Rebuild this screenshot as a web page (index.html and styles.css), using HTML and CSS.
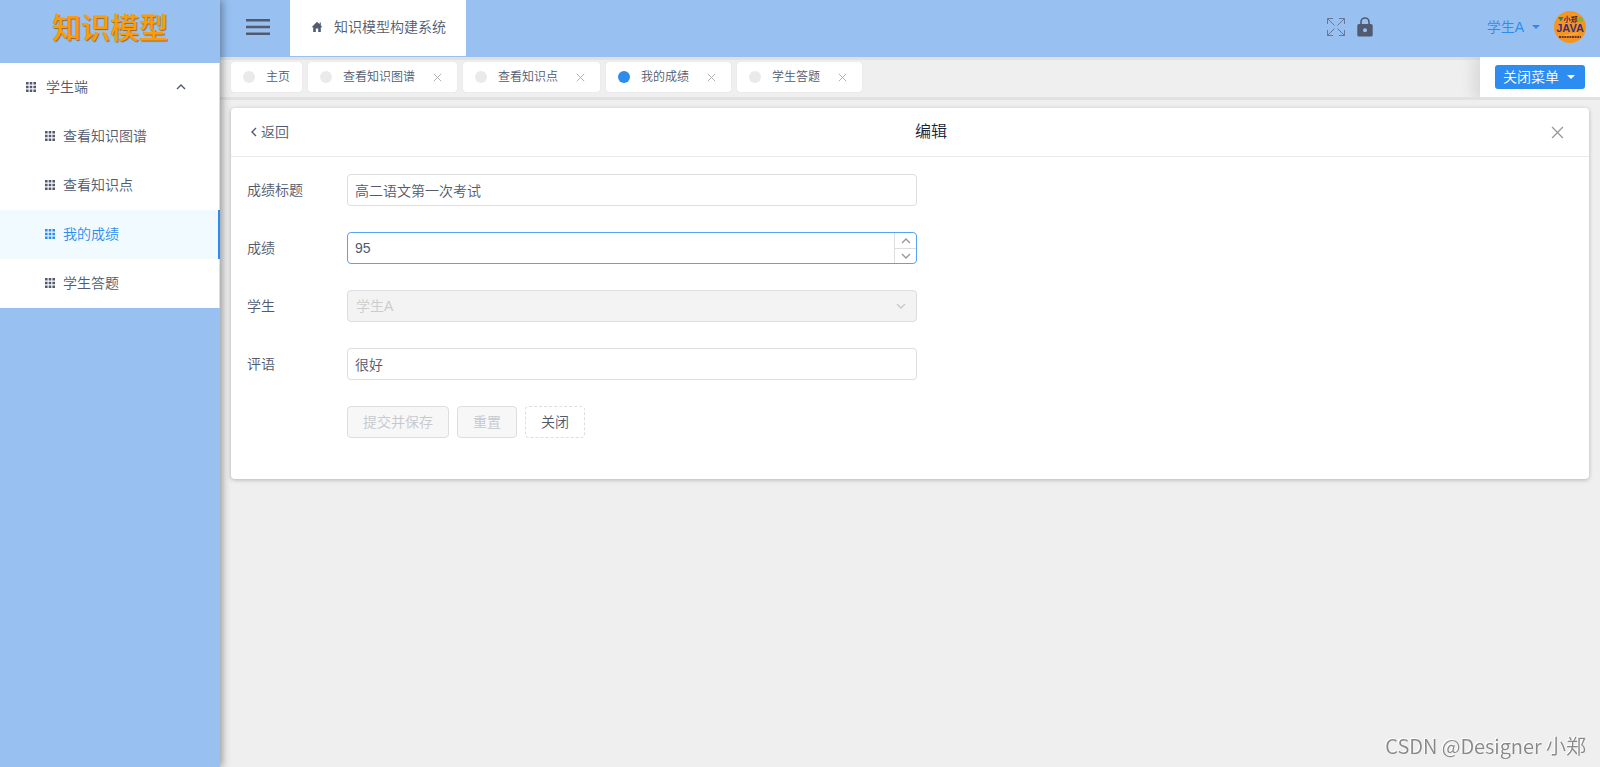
FILE: index.html
```html
<!DOCTYPE html>
<html lang="zh-CN">
<head>
<meta charset="utf-8">
<title>知识模型构建系统</title>
<link rel="stylesheet" href="styles.css">
</head>
<body>
<svg class="sprite" aria-hidden="true">
  <symbol id="grid" viewBox="0 0 10 10"><path d="M0 0h2.6v2.6H0zM3.7 0h2.6v2.6H3.7zM7.4 0H10v2.6H7.4zM0 3.7h2.6v2.6H0zM3.7 3.7h2.6v2.6H3.7zM7.4 3.7H10v2.6H7.4zM0 7.4h2.6V10H0zM3.7 7.4h2.6V10H3.7zM7.4 7.4H10V10H7.4z" fill="currentColor"/></symbol>
  <symbol id="cross" viewBox="0 0 12 12"><path d="M1 1l10 10M11 1L1 11" fill="none" stroke="currentColor" stroke-width="1.2"/></symbol>
  <symbol id="up" viewBox="0 0 10 6"><path d="M1 5l4-4 4 4" fill="none" stroke="currentColor" stroke-width="1.4"/></symbol>
  <symbol id="down" viewBox="0 0 10 6"><path d="M1 1l4 4 4-4" fill="none" stroke="currentColor" stroke-width="1.4"/></symbol>
  <symbol id="caret" viewBox="0 0 8 4"><path d="M0 0h8L4 4z" fill="currentColor"/></symbol>
</svg>
<div class="app">
  <aside class="sidebar">
    <div class="logo">知识模型</div>
    <nav class="menu">
      <button class="menu-title" type="button"><svg class="i-grid"><use href="#grid"/></svg><span>学生端</span><svg class="i-arrow"><use href="#up"/></svg></button>
      <a class="menu-item" href="#"><svg class="i-grid"><use href="#grid"/></svg>查看知识图谱</a>
      <a class="menu-item" href="#"><svg class="i-grid"><use href="#grid"/></svg>查看知识点</a>
      <a class="menu-item active" href="#"><svg class="i-grid"><use href="#grid"/></svg>我的成绩</a>
      <a class="menu-item" href="#"><svg class="i-grid"><use href="#grid"/></svg>学生答题</a>
    </nav>
  </aside>
  <div class="main">
    <header class="header">
      <button class="burger" type="button" aria-label="菜单"><svg width="24" height="18" viewBox="0 0 24 18"><path d="M0 2.2h24M0 9h24M0 15.800h24" stroke="currentColor" stroke-width="2.4"/></svg></button>
      <a class="system" href="#"><svg width="12" height="12" viewBox="0 0 12 12"><path d="M6 .8L.6 6.2h1.6V11h2.600V7.600h2.400V11h2.600V6.200h1.600L9.800 4.500V1.600H8.600v1.700z" fill="currentColor"/></svg>知识模型构建系统</a>
      <div class="tools">
        <button type="button" aria-label="全屏"><svg width="20" height="20" viewBox="0 0 20 20"><path d="M1.500 7V1.500H7M1.500 1.500l7 7M13 1.500h5.500V7M18.500 1.500l-7 7M1.500 13v5.500H7M1.500 18.500l7-7M13 18.500h5.500V13M18.500 18.500l-7-7" fill="none" stroke="currentColor" stroke-width="1"/></svg></button>
        <button type="button" aria-label="锁屏"><svg width="16" height="20" viewBox="0 0 16 20"><path d="M4 8V5a4 4 0 0 1 8 0v3" fill="none" stroke="currentColor" stroke-width="1.600"/><path d="M2 7h12a1.700 1.700 0 0 1 1.700 1.700v9.200a1.700 1.700 0 0 1-1.700 1.700H2a1.700 1.700 0 0 1-1.700-1.700V8.700A1.700 1.700 0 0 1 2 7zm6 4.200a2 2 0 1 0 0 4 2 2 0 0 0 0-4z" fill="currentColor" fill-rule="evenodd"/></svg></button>
      </div>
      <button class="user" type="button">学生A<svg class="i-caret"><use href="#caret"/></svg></button>
      <svg class="avatar" viewBox="0 0 32 32" role="img" aria-label="头像"><circle cx="16" cy="16" r="16" fill="#f7941e"/><path d="M12 13L20 3M10 25l14-3" stroke="#f9b05a" stroke-width="1"/><path d="M4 6h5.500L7 10.500z" fill="#1c8c62"/><circle cx="26.500" cy="8.500" r="2.600" fill="#8fb03a"/><text class="av-top" x="16.500" y="10.500" text-anchor="middle">小郑</text><text class="av-main" x="16" y="21" text-anchor="middle">JAVA</text><path d="M5 26h22" stroke="#6b3a2c" stroke-width="2" stroke-dasharray="2 .6"/></svg>
    </header>
    <div class="tagbar">
      <div class="tags">
        <div class="tag"><i class="dot"></i>主页</div>
        <div class="tag"><i class="dot"></i>查看知识图谱<button type="button" aria-label="关闭"><svg><use href="#cross"/></svg></button></div>
        <div class="tag"><i class="dot"></i>查看知识点<button type="button" aria-label="关闭"><svg><use href="#cross"/></svg></button></div>
        <div class="tag"><i class="dot on"></i>我的成绩<button type="button" aria-label="关闭"><svg><use href="#cross"/></svg></button></div>
        <div class="tag"><i class="dot"></i>学生答题<button type="button" aria-label="关闭"><svg><use href="#cross"/></svg></button></div>
      </div>
      <div class="closer"><button type="button">关闭菜单<svg class="i-caret"><use href="#caret"/></svg></button></div>
    </div>
    <main class="content">
      <section class="card">
        <div class="card-head">
          <a class="back" href="#"><svg width="6" height="10" viewBox="0 0 6 10"><path d="M5 1L1 5l4 4" fill="none" stroke="currentColor" stroke-width="1.4"/></svg>返回</a>
          <h1>编辑</h1>
          <button class="card-close" type="button" aria-label="关闭"><svg><use href="#cross"/></svg></button>
        </div>
        <form class="form">
          <label for="title">成绩标题</label>
          <input class="field" id="title" type="text" value="高二语文第一次考试">
          <label for="score">成绩</label>
          <div class="number">
            <input id="score" type="number" value="95">
            <div class="steps"><button type="button" aria-label="增加"><svg><use href="#up"/></svg></button><button type="button" aria-label="减少"><svg><use href="#down"/></svg></button></div>
          </div>
          <label for="student">学生</label>
          <div class="select"><select class="field" id="student" disabled><option>学生A</option></select><svg><use href="#down"/></svg></div>
          <label for="remark">评语</label>
          <input class="field" id="remark" type="text" value="很好">
          <div class="actions">
            <button type="button" disabled>提交并保存</button>
            <button type="button" disabled>重置</button>
            <button class="dashed" type="button">关闭</button>
          </div>
        </form>
      </section>
    </main>
  </div>
</div>
<div class="watermark">CSDN @Designer 小郑</div>
</body>
</html>
```

FILE: styles.css
```css
* { box-sizing: border-box; }
body {
  margin: 0;
  background: #efefef;
  color: #515a6e;
  font: 350 14px/20px "Liberation Sans", "Noto Sans CJK SC", sans-serif;
}
button, input, select { font: inherit; color: inherit; }
button { border: 0; padding: 0; background: none; cursor: pointer; }
a { color: inherit; text-decoration: none; }
svg { display: block; flex: none; }
.sprite { position: absolute; width: 0; height: 0; }

.app { display: flex; min-height: 100vh; }
.sidebar {
  flex: 0 0 220px;
  background: #98c1f2;
  box-shadow: 2px 0 8px rgba(29, 35, 41, .45);
  z-index: 2;
}
.logo {
  height: 63px;
  padding-top: 6px;
  text-align: center;
  color: #ff9b05;
  font: 500 29px/40px "Noto Sans CJK SC", sans-serif;
  text-shadow: 1px 1px 1px #8a6a3c;
}
.menu { display: flex; flex-direction: column; background: #fff; }
.menu-title, .menu-item {
  display: flex;
  align-items: center;
  height: 49px;
  padding-bottom: 2px;
  border-right: 1px solid #dcdee2;
}
.menu-title { gap: 10px; padding-left: 26px; padding-right: 33px; }
.menu-item { gap: 8px; padding-left: 45px; }
.menu-item.active { background: #f0faff; color: #2d8cf0; border-right: 2px solid #2d8cf0; }
.i-grid { width: 10px; height: 10px; }
.i-arrow { width: 10px; height: 6px; margin-left: auto; }
.i-caret { width: 8px; height: 4px; }

.main { flex: 1; min-width: 0; }
.header { display: flex; align-items: center; height: 57px; padding: 0 14px 4px 26px; background: #98c1f2; }
.burger { margin-right: 20px; }
.system {
  display: flex;
  align-items: center;
  align-self: stretch;
  gap: 11px;
  margin-bottom: -3px;
  padding: 0 20px 3px 21px;
  background: #fff;
}
.tools { display: flex; align-items: center; gap: 11px; margin-left: auto; margin-right: 114px; }
.tools button:first-child { opacity: .7; }
.user { display: flex; align-items: center; gap: 8px; margin-right: 14px; color: #2d8cf0; }
.avatar { width: 32px; height: 32px; }
.av-top { font: 700 7px "Noto Sans CJK SC", sans-serif; fill: #4a2a3a; }
.av-main { font: 700 11px "Liberation Sans", sans-serif; fill: #3b2f7a; }

.tagbar {
  display: flex;
  height: 43px;
  border-top: 3px solid #e1e1e1;
  border-bottom: 3px solid #e1e1e1;
  font-size: 12px;
}
.tags { display: flex; flex: 1; gap: 6px; padding: 2px 11px 0; }
.tag {
  display: flex;
  align-items: center;
  height: 30px;
  padding: 0 12px;
  background: #fff;
  border-radius: 3px;
  box-shadow: 0 0 1px #ccc;
  white-space: nowrap;
}
.dot { width: 12px; height: 12px; margin-right: 11px; border-radius: 50%; background: #e8eaec; }
.dot.on { background: #2d8cf0; }
.tag button { margin: 0 3px 0 18px; color: #aaa; }
.tag svg { width: 9px; height: 9px; }
.closer {
  display: flex;
  align-items: center;
  margin-top: -3px;
  padding: 0 15px;
  background: #fff;
  box-shadow: -3px 0 15px 3px rgba(0, 0, 0, .1);
  clip-path: inset(0 0 0 -24px);
}
.closer button {
  display: flex;
  align-items: center;
  gap: 8px;
  height: 24px;
  padding: 0 10px 0 8px;
  border-radius: 3px;
  background: #2d8cf0;
  color: #fff;
  font-size: 14px;
}

.content { padding: 8px 11px; }
.card { background: #fff; border-radius: 4px; box-shadow: 0 1px 4px rgba(0, 0, 0, .25); }
.card-head {
  position: relative;
  display: flex;
  align-items: center;
  height: 49px;
  padding: 0 16px 0 20px;
  border-bottom: 1px solid #e8eaec;
}
.back { display: flex; align-items: center; gap: 4px; }
.card-head h1 { flex: 1; margin: 0; text-align: center; color: #17233d; font-size: 16px; font-weight: 350; }
.card-close { position: absolute; right: 25px; top: 18px; color: #999; }
.card-close svg { width: 13px; height: 13px; }

.form {
  display: grid;
  grid-template-columns: 100px minmax(0, 570px);
  row-gap: 26px;
  align-items: center;
  padding: 17px 16px 41px;
}
.field, .number {
  width: 100%;
  height: 32px;
  border: 1px solid #dcdee2;
  border-radius: 4px;
  background: #fff;
}
.field { padding: 0 7px; }
.number { display: flex; border-color: #57a3f3; overflow: hidden; }
.number input {
  flex: 1;
  min-width: 0;
  border: 0;
  padding: 0 7px;
  outline: 0;
  background: none;
  appearance: textfield;
}
.number input::-webkit-inner-spin-button { appearance: none; margin: 0; }
.steps { display: grid; grid-template-rows: 1fr 1fr; width: 22px; border-left: 1px solid #dcdee2; color: #999; }
.steps button { display: grid; place-items: center; }
.steps button + button { border-top: 1px solid #dcdee2; }
.steps svg { width: 10px; height: 6px; }
.select { position: relative; }
select.field { display: block; appearance: none; padding: 0 8px; background: #f3f3f3; color: #ccc; opacity: 1; }
.select svg { position: absolute; right: 11px; top: 13px; width: 10px; height: 6px; color: #c5c8ce; }
.actions { grid-column: 2; display: flex; gap: 8px; }
.actions button { height: 32px; padding: 0 15px; border: 1px solid #dcdee2; border-radius: 4px; }
.actions button:disabled { background: #f7f7f7; color: #c5c8ce; }
.actions .dashed { border-style: dashed; }

.watermark {
  position: fixed;
  right: 14px;
  bottom: 7px;
  color: #888;
  font: 350 20px/28px "Noto Sans CJK SC", sans-serif;
  text-shadow: -1px -1px 0 #fff;
}
```
